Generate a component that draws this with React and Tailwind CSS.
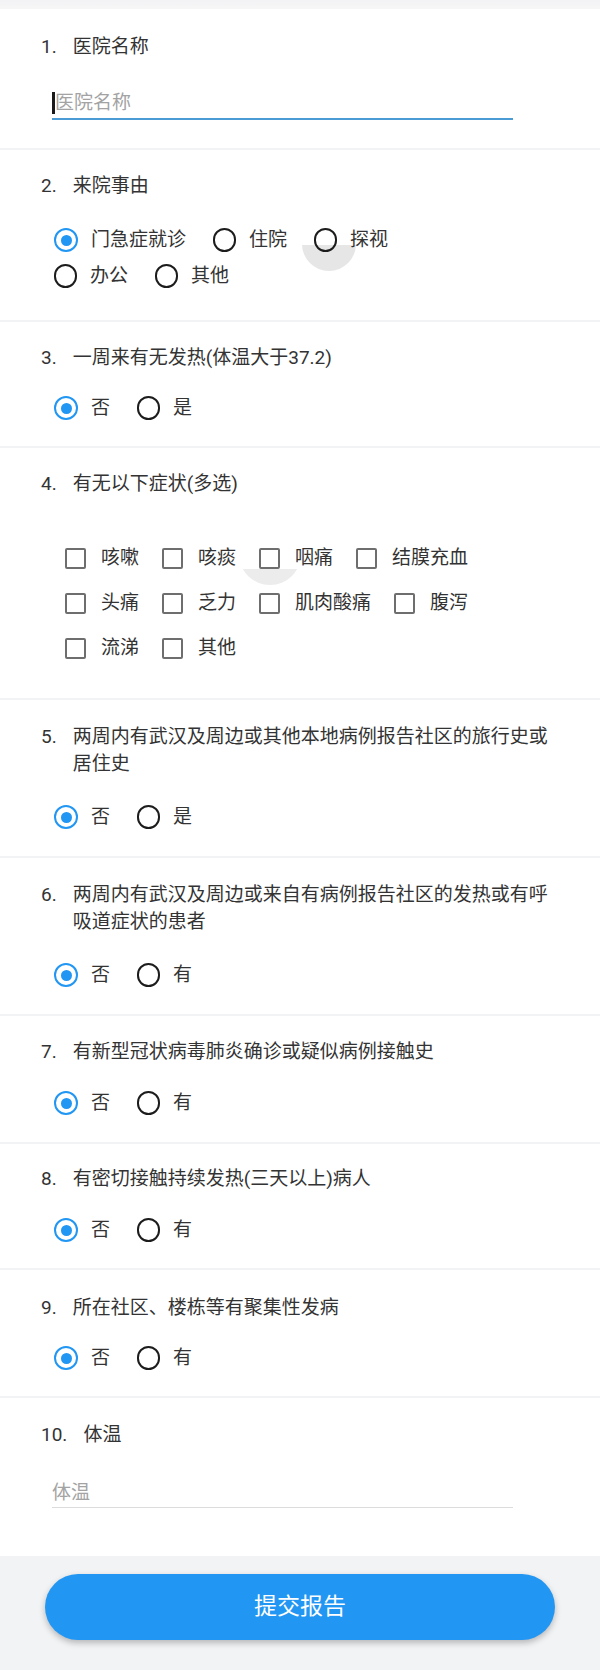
import React from "react";

const FONT = "font-[family-name:Roboto,'Noto_Sans_CJK_SC',sans-serif]";

/** Radio — blue ring with dot when checked, dark ring otherwise. */
function Radio({ checked }) {
  if (checked) {
    return (
      <span className="flex h-[24px] w-[24px] shrink-0 items-center justify-center rounded-full border-[2.5px] border-[#2196f3] bg-white">
        <span className="h-[11px] w-[11px] rounded-full bg-[#2196f3]" />
      </span>
    );
  }
  return <span className="h-[24px] w-[23px] shrink-0 rounded-full border-[2.5px] border-[#1c1c1c]" />;
}

function Checkbox() {
  return <span className="h-[21px] w-[21px] shrink-0 rounded-[2px] border-2 border-[#6e6e6e]" />;
}

function Label({ no, children }) {
  return (
    <div className="flex text-[19px] leading-[27px] text-[#333]">
      <span className="mr-[16px] shrink-0">{no}.</span>
      <span className="w-[476px]">{children}</span>
    </div>
  );
}

// ripple is passed as children and painted first, so the options sit on top of it
function RadioGroup({ options, checked = 0, className, children }) {
  return (
    <div className={`relative ml-[13px] flex w-[450px] flex-wrap ${className}`}>
      {children}
      {options.map((o, i) => (
        <div key={o} className="relative mr-[27px] flex h-[36px] items-center gap-[13px] text-[19px] text-[#333]">
          <Radio checked={i === checked} />
          <span>{o}</span>
        </div>
      ))}
    </div>
  );
}

const symptoms = ["咳嗽", "咳痰", "咽痛", "结膜充血", "头痛", "乏力", "肌肉酸痛", "腹泻", "流涕", "其他"];

export default function App() {
  return (
    <div className={`${FONT} flex w-[600px] flex-col bg-[#f2f3f5]`}>
      <div className="h-[9px] bg-gradient-to-b from-[#f2f2f4] to-[#f7f7f8]" />
      <div className="flex flex-col gap-[2px]">
        {/* 1 */}
        <div className="bg-white px-[41px] pt-[24px] pb-[28px]">
          <Label no="1">医院名称</Label>
          <div className="mt-[28px] ml-[11px] flex h-[32px] w-[461px] items-center border-b-2 border-[#4a9bd6]">
            <span className="h-[22px] w-[3px] bg-[#1a1a1a]" />
            <input
              className="w-full bg-transparent text-[19px] text-[#333] outline-none placeholder:text-[#a3a3a3]"
              placeholder="医院名称"
            />
          </div>
        </div>

        {/* 2 */}
        <div className="bg-white px-[41px] pt-[22px] pb-[26px]">
          <Label no="2">来院事由</Label>
          <RadioGroup className="mt-[23px]" options={["门急症就诊", "住院", "探视", "办公", "其他"]}>
            <div className="absolute left-[248px] top-[23px] h-[26px] w-[54px] overflow-hidden">
              <div className="absolute left-0 top-[-28px] h-[54px] w-[54px] rounded-full bg-[#e6e6e6]" />
            </div>
          </RadioGroup>
        </div>

        {/* 3 */}
        <div className="bg-white px-[41px] pt-[22px] pb-[20px]">
          <Label no="3">一周来有无发热(体温大于37.2)</Label>
          <RadioGroup className="mt-[19px]" options={["否", "是"]} />
        </div>

        {/* 4 */}
        <div className="bg-white px-[41px] pt-[22px] pb-[27px]">
          <Label no="4">有无以下症状(多选)</Label>
          <div className="relative mt-[39px] ml-[24px] flex w-[440px] flex-wrap">
            <div className="absolute left-[174px] top-[33px] h-[17px] w-[62px] overflow-hidden">
              <div className="absolute left-0 top-[-46px] h-[62px] w-[62px] rounded-full bg-[#ececec]" />
            </div>
            {symptoms.map((s) => (
              <div key={s} className="relative mr-[23px] flex h-[45px] items-center gap-[15px] text-[19px] text-[#333]">
                <Checkbox />
                <span>{s}</span>
              </div>
            ))}
          </div>
        </div>

        {/* 5 */}
        <div className="bg-white px-[41px] pt-[23px] pb-[21px]">
          <Label no="5">两周内有武汉及周边或其他本地病例报告社区的旅行史或居住史</Label>
          <RadioGroup className="mt-[22px]" options={["否", "是"]} />
        </div>

        {/* 6 */}
        <div className="bg-white px-[41px] pt-[23px] pb-[21px]">
          <Label no="6">两周内有武汉及周边或来自有病例报告社区的发热或有呼吸道症状的患者</Label>
          <RadioGroup className="mt-[22px]" options={["否", "有"]} />
        </div>

        {/* 7 */}
        <div className="bg-white px-[41px] pt-[22px] pb-[21px]">
          <Label no="7">有新型冠状病毒肺炎确诊或疑似病例接触史</Label>
          <RadioGroup className="mt-[20px]" options={["否", "有"]} />
        </div>

        {/* 8 */}
        <div className="bg-white px-[41px] pt-[21px] pb-[20px]">
          <Label no="8">有密切接触持续发热(三天以上)病人</Label>
          <RadioGroup className="mt-[20px]" options={["否", "有"]} />
        </div>

        {/* 9 */}
        <div className="bg-white px-[41px] pt-[24px] pb-[20px]">
          <Label no="9">所在社区、楼栋等有聚集性发病</Label>
          <RadioGroup className="mt-[19px]" options={["否", "有"]} />
        </div>

        {/* 10 */}
        <div className="bg-white px-[41px] pt-[23px] pb-[48px]">
          <Label no="10">体温</Label>
          <div className="mt-[31px] ml-[11px] flex h-[29px] w-[461px] items-center border-b border-[#dcdcdc]">
            <input
              className="w-full bg-transparent text-[19px] text-[#333] outline-none placeholder:text-[#a3a3a3]"
              placeholder="体温"
            />
          </div>
        </div>
      </div>

      {/* footer */}
      <div className="bg-[#f2f3f5] px-[45px] pt-[18px] pb-[30px]">
        <button className="flex h-[66px] w-full items-center justify-center rounded-full bg-[#2196f3] text-[23px] text-white shadow-[0_3px_6px_rgba(0,0,0,0.25)]">
          提交报告
        </button>
      </div>
    </div>
  );
}
